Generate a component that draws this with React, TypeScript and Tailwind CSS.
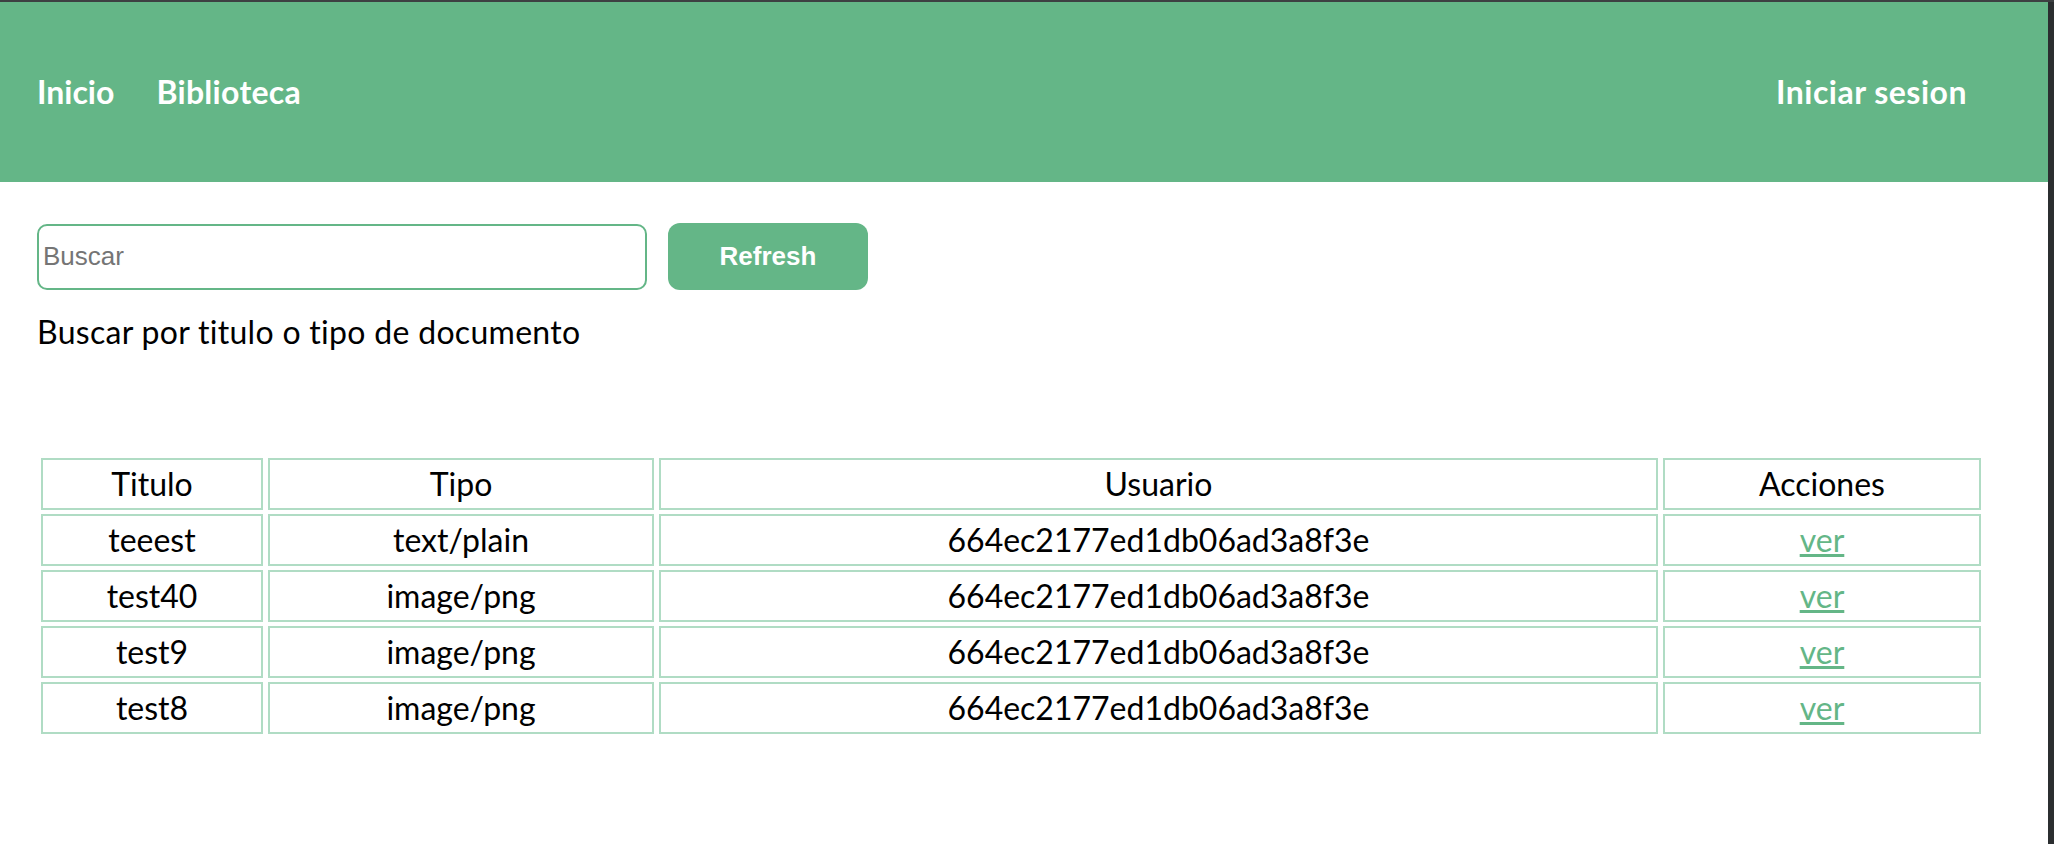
import React from "react";

const rows = [
  { titulo: "teeest", tipo: "text/plain", usuario: "664ec2177ed1db06ad3a8f3e" },
  { titulo: "test40", tipo: "image/png", usuario: "664ec2177ed1db06ad3a8f3e" },
  { titulo: "test9", tipo: "image/png", usuario: "664ec2177ed1db06ad3a8f3e" },
  { titulo: "test8", tipo: "image/png", usuario: "664ec2177ed1db06ad3a8f3e" },
];

export default function App() {
  return (
    <div className="flex min-h-screen w-full bg-white border-t-2 border-[#3d4042] font-['Lato','Noto_Sans',sans-serif]">
      <div className="flex-1 flex flex-col">
        <header className="h-[180px] bg-[#64b687] flex items-center justify-between pl-[37px] pr-[81px] text-white text-[32px] font-bold">
          <nav className="flex items-center gap-[42px]">
            <a href="#" className="leading-none">Inicio</a>
            <a href="#" className="leading-none tracking-[0.3px]">Biblioteca</a>
          </nav>
          <a href="#" className="leading-none tracking-[0.5px]">Iniciar sesion</a>
        </header>

        <main className="pl-[37px] pt-[41px]">
          <div className="flex items-center gap-[21px]">
            <input
              type="text"
              placeholder="Buscar"
              className="w-[610px] h-[66px] border-2 border-[#64b687] rounded-[10px] pl-[4px] text-[26px] font-['Liberation_Sans',Arial,sans-serif] placeholder:text-[#757575] outline-none"
            />
            <button className="w-[200px] h-[67px] rounded-[12px] bg-[#64b687] text-white text-[26px] font-bold font-['Liberation_Sans',Arial,sans-serif]">
              Refresh
            </button>
          </div>
          <p className="mt-[22px] text-[32px] leading-[40px] tracking-[0.3px] text-black">
            Buscar por titulo o tipo de documento
          </p>

          <table className="mt-[102px] -ml-[1px] table-fixed border-separate border-spacing-x-[5px] border-spacing-y-[4px] w-[1950px] text-[32px] text-black">
            <colgroup>
              <col className="w-[222px]" />
              <col className="w-[386px]" />
              <col className="w-[999px]" />
              <col className="w-[318px]" />
            </colgroup>
            <thead>
              <tr>
                {["Titulo", "Tipo", "Usuario", "Acciones"].map((h) => (
                  <th key={h} className="h-[52px] border-2 border-[#b0dcc4] font-normal text-center p-0 leading-none">
                    {h}
                  </th>
                ))}
              </tr>
            </thead>
            <tbody>
              {rows.map((r, i) => (
                <tr key={i}>
                  <td className="h-[52px] border-2 border-[#b0dcc4] text-center p-0 leading-none">{r.titulo}</td>
                  <td className="h-[52px] border-2 border-[#b0dcc4] text-center p-0 leading-none">{r.tipo}</td>
                  <td className="h-[52px] border-2 border-[#b0dcc4] text-center p-0 leading-none">{r.usuario}</td>
                  <td className="h-[52px] border-2 border-[#b0dcc4] text-center p-0 leading-none">
                    <a href="#" className="text-[#64b687] underline">ver</a>
                  </td>
                </tr>
              ))}
            </tbody>
          </table>
        </main>
      </div>
      <div className="w-[6px] bg-[#2b2e30]" />
    </div>
  );
}
